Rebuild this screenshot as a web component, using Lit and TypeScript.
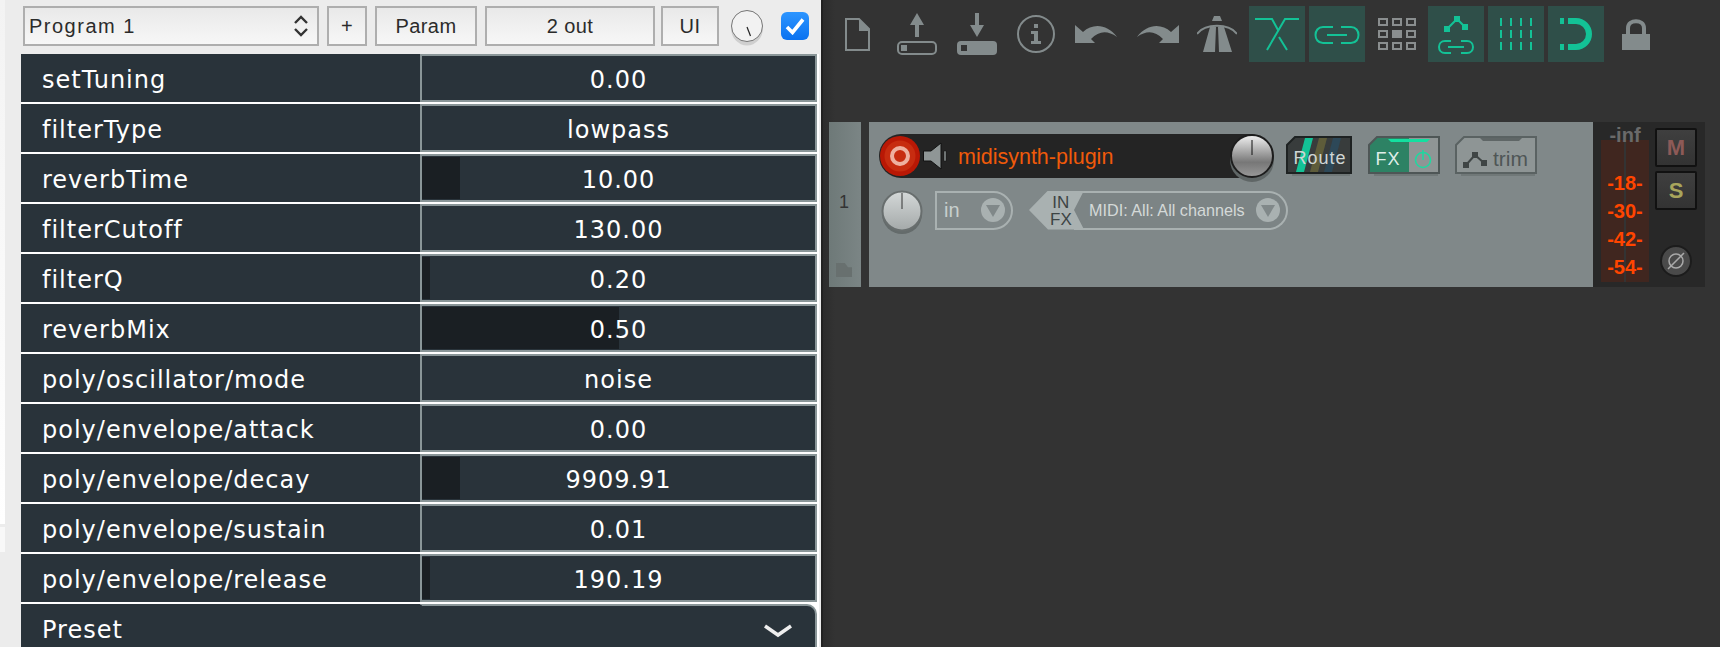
import { LitElement, html, css, svg } from "lit";
import { customElement } from "lit/decorators.js";

const rows: [string, string, number][] = [
  ["setTuning", "0.00", 0],
  ["filterType", "lowpass", 0],
  ["reverbTime", "10.00", 9.7],
  ["filterCutoff", "130.00", 0],
  ["filterQ", "0.20", 2],
  ["reverbMix", "0.50", 50],
  ["poly/oscillator/mode", "noise", 0],
  ["poly/envelope/attack", "0.00", 0],
  ["poly/envelope/decay", "9909.91", 9.7],
  ["poly/envelope/sustain", "0.01", 0],
  ["poly/envelope/release", "190.19", 2],
];

const G = "#838b8c";
const T = "#13c296";

const icons = {
  file: svg`<path d="M1 1H14L24 11V32H1Z" fill="none" stroke="${G}" stroke-width="2"/><path d="M14 1L24 11V13H14Z" fill="${G}"/>`,
  up: svg`<path d="M20 0L27 12H22V24H18V12H13Z" fill="${G}"/><rect x="1" y="29" width="38" height="12" rx="4" fill="none" stroke="${G}" stroke-width="2"/><rect x="4" y="32" width="6" height="6" fill="${G}"/>`,
  down: svg`<path d="M20 24L27 12H22V0H18V12H13Z" fill="${G}"/><rect x="0" y="28" width="40" height="14" rx="4" fill="${G}"/><rect x="4" y="32" width="6" height="6" fill="#333"/>`,
  info: svg`<circle cx="19" cy="19" r="18" fill="none" stroke="${G}" stroke-width="2"/><path d="M17 9h4v4h-4ZM14 16h7v10h3v3H14v-3h3v-7h-3Z" fill="${G}"/>`,
  undo: svg`<path d="M0 0L8 7C18 -2 32 -1 42 12C32 5 24 6 16 14L20 18H0Z" fill="${G}"/>`,
  redo: svg`<path d="M42 0L34 7C24 -2 10 -1 0 12C10 5 18 6 26 14L22 18H42Z" fill="${G}"/>`,
  road: svg`<path d="M17 0H23L25 5H15Z" fill="${G}"/><path d="M0 18C8 7 32 7 40 18" fill="none" stroke="${G}" stroke-width="2"/><path d="M13 11H19L18 36H6ZM21 11H27L35 36H22Z" fill="${G}"/>`,
  env: svg`<path d="M6 13H23L29 24M18 44L36 13H50M30 31L38 44" fill="none" stroke="${T}" stroke-width="2"/>`,
  link: svg`<path d="M24 21H14C4 21 4 37 14 37H24M32 21H42C52 21 52 37 42 37H32M18 29H38" fill="none" stroke="${T}" stroke-width="2"/>`,
  autoLink: svg`<path d="M19 23L29 13L37 21" fill="none" stroke="${T}" stroke-width="2"/><path d="M16 20h6v6h-6ZM26 10h6v6h-6ZM34 18h6v6h-6Z" fill="${T}"/><path d="M23 35H17C9 35 9 47 17 47H23M33 35H39C47 35 47 47 39 47H33M20 41H36" fill="none" stroke="${T}" stroke-width="2"/>`,
  magnet: svg`<path d="M12 12h4v6h-4ZM12 38h4v6h-4Z" fill="${T}"/><path d="M20 12H28A16 16 0 0 1 28 44H20V38H28A10 10 0 0 0 28 18H20Z" fill="${T}"/>`,
  lock: svg`<path d="M6 16V10C6 1 22 1 22 10V16" fill="none" stroke="${G}" stroke-width="4"/><rect x="0" y="16" width="28" height="16" fill="${G}"/>`,
};

const gridCells = [0, 1, 2, 3, 4, 5, 6, 7, 8];

@customElement("param-row")
class ParamRow extends LitElement {
  static properties = { name: {}, value: {}, pct: { type: Number } };
  name = "";
  value = "";
  pct = 0;
  static styles = css`
    :host { display: flex; height: 48px; }
    .n { width: 399px; padding: 2px 0 0 21px; box-sizing: border-box; color: #fff; line-height: 49px; background: #29333a; }
    .v { flex: 1; margin-right: 2px; position: relative; border: 2px solid #8a9698; background: #29333a; color: #fff; text-align: center; line-height: 48px; }
    .f { position: absolute; left: 0; top: 1px; bottom: 1px; background: #1a1f23; }
    .t { position: relative; }
  `;
  render() {
    return html`<div class="n">${this.name}</div><div class="v">${this.pct ? html`<div class="f" style="width:${this.pct}%"></div>` : ""}<span class="t">${this.value}</span></div>`;
  }
}

@customElement("app-root")
class AppRoot extends LitElement {
  static styles = css`
    :host { display: flex; width: 1720px; height: 647px; overflow: hidden; background: #333; font-family: "Lucida Grande", "DejaVu Sans", sans-serif; }
    .left { width: 823px; height: 647px; flex: none; box-sizing: border-box; padding: 6px 0 0 21px; background: #ececec; border-right: 2px solid #222; overflow: hidden; position: relative; }
    .edge { position: absolute; left: 0; top: 0; width: 5px; height: 524px; background: linear-gradient(#f3f3f3, #fff); }
    .edge2 { position: absolute; left: 0; top: 527px; width: 5px; height: 25px; background: #f8f8f8; }
    .bar { display: flex; align-items: center; height: 40px; padding-left: 2px; font-family: "Liberation Sans", sans-serif; font-size: 20px; color: #2b2b2b; margin-bottom: 8px; }
    .btn { box-sizing: border-box; height: 40px; border: 2px solid #aeaeae; background: linear-gradient(#e9e9e9, #f7f7f7); display: flex; align-items: center; justify-content: center; letter-spacing: .4px; }
    .sel { width: 296px; justify-content: space-between; padding: 0 8px 0 4px; letter-spacing: 1.5px; }
    .plus { width: 40px; margin-left: 8px; }
    .param { width: 102px; margin-left: 8px; }
    .out { width: 170px; margin-left: 8px; }
    .ui { width: 58px; margin-left: 6px; }
    .knob { width: 32px; height: 36px; margin: 4px 0 0 12px; flex: none; }
    .check { width: 28px; height: 28px; margin-left: 18px; border-radius: 6px; background: linear-gradient(#2c95ff, #0b72f0); display: flex; align-items: center; justify-content: center; }
    .rows { display: flex; flex-direction: column; gap: 2px; width: 798px; font-size: 24px; letter-spacing: 1px; background: #fff; }
    .preset { display: flex; height: 60px; color: #fff; }
    .preset .n { width: 399px; padding: 2px 0 0 21px; box-sizing: border-box; line-height: 49px; background: #29333a; }
    .preset .v { flex: 1; margin-right: 2px; background: #29333a; border-top: 2px solid #8a9698; border-right: 2px solid #8a9698; border-left: 2px solid #29333a; border-top-right-radius: 10px; display: flex; justify-content: flex-end; padding: 18px 22px 0 0; box-sizing: border-box; }

    .right { flex: 1; min-width: 0; display: flex; flex-direction: column; background: linear-gradient(90deg, #2c2c2c, #333 12px); }
    .tools { display: flex; align-items: center; height: 56px; margin-top: 6px; padding-left: 22px; }
    .ico { display: block; flex: none; }
    .act { width: 56px; height: 56px; background: #2f4f49; flex: none; display: block; }
    .grid { display: grid; grid-template-columns: repeat(3, 10px); gap: 4px; flex: none; width: 38px; margin: 0 12px 0 13px; }
    .grid div { height: 8px; border: 2px solid #8a8e8f; box-sizing: border-box; }
    .grid div.on { background: #8a8e8f; }

    .track { display: flex; height: 165px; margin: 60px 15px 0 6px; color: #333; }
    .num { width: 32px; background: linear-gradient(90deg, #6e7978, #7b8585); display: flex; flex-direction: column; align-items: center; justify-content: space-between; padding: 69px 2px 10px 0; box-sizing: border-box; font: 18px "Liberation Sans", sans-serif; color: #333; line-height: 22px; }
    .folder { width: 16px; height: 14px; background: #68706f; clip-path: polygon(0 0, 55% 0, 75% 30%, 100% 30%, 100% 100%, 0 100%); }
    .main { width: 724px; margin-left: 8px; background: #808889; padding: 12px 0 0 10px; box-sizing: border-box; display: flex; flex-direction: column; gap: 12px; }
    .line { display: flex; align-items: center; font-family: "Liberation Sans", sans-serif; }
    .l1 { height: 44px; }
    .l2 { height: 40px; }
    .pill { width: 393px; height: 44px; border-radius: 22px; background: #242424; display: flex; align-items: center; box-sizing: border-box; flex: none; }
    .rec { width: 40px; height: 40px; flex: none; margin-left: 1px; }
    .spk { width: 24px; height: 28px; flex: none; margin-left: 3px; }
    .name { color: #f05a0a; font-size: 21.5px; margin: 2px 0 0 11px; flex: 1; }
    .vol { width: 44px; height: 50px; flex: none; margin: 6px -2px 0 0; }
    .sb { width: 66px; height: 40px; flex: none; margin-left: 14px; }
    .fx { width: 72px; margin-left: 16px; }
    .trim { width: 82px; margin-left: 15px; }
    .sb text { font-family: "Liberation Sans", sans-serif; }
    .pan { width: 42px; height: 46px; flex: none; margin: 6px 12px 0 2px; }
    .in { box-sizing: border-box; width: 78px; height: 39px; border: 2px solid #a9b1b1; border-radius: 0 20px 20px 0; display: flex; align-items: center; justify-content: space-between; padding: 0 6px 0 7px; color: #c8cfce; font-size: 20px; flex: none; }
    .dd { width: 24px; height: 24px; flex: none; display: block; }
    .chan { display: flex; height: 39px; width: 259px; margin-left: 16px; flex: none; position: relative; }
    .tag { position: relative; z-index: 1; width: 55px; flex: none; background: #a9b1b1; clip-path: polygon(0 50%, 19px 0, 100% 0, 45px 50%, 100% 100%, 19px 100%); }
    .tagt { position: absolute; z-index: 2; left: 21px; top: 3px; font-size: 17px; line-height: 17px; color: #3d4444; text-align: center; }
    .midi { flex: 1; margin-left: -10px; display: flex; align-items: center; justify-content: space-between; padding: 0 6px 0 15px; border: 2px solid #a9b1b1; border-left: 0; border-radius: 0 20px 20px 0; color: #d4d9d8; font-size: 16.2px; background: #7c8485; box-sizing: border-box; }

    .meter { flex: 1; min-width: 0; background: #282828; display: flex; font-family: "Liberation Sans", sans-serif; padding-left: 8px; position: relative; }
    .vu { width: 48px; flex: none; margin-top: 18px; height: 142px; background: linear-gradient(90deg, #40261f 0 23px, #333 23px 25px, #40261f 25px); display: flex; flex-direction: column; align-items: center; padding-top: 29px; box-sizing: border-box; color: #ff4500; font-weight: 700; font-size: 20px; line-height: 28px; }
    .inf { position: absolute; left: 8px; width: 48px; top: 2px; text-align: center; font-weight: 700; font-size: 20px; color: #6a6a6a; }
    .ms { display: flex; flex-direction: column; margin-left: 6px; padding-top: 6px; align-items: center; }
    .m { width: 42px; height: 39px; box-sizing: border-box; border: 2px solid #111; border-radius: 2px; background: linear-gradient(#3f3f3f, #333); font-weight: 700; font-size: 22px; display: flex; align-items: center; justify-content: center; margin-bottom: 4px; }
    .phase { width: 32px; height: 32px; margin-top: 31px; }
  `;

  render() {
    return html`
      <div class="left">
        <div class="edge"></div>
        <div class="edge2"></div>
        <div class="bar">
          <div class="btn sel"><span>Program 1</span>
            <svg width="16" height="24" viewBox="0 0 16 24"><path d="M2 9L8 3L14 9M2 15L8 21L14 15" fill="none" stroke="#333" stroke-width="2.4"/></svg>
          </div>
          <div class="btn plus">+</div>
          <div class="btn param">Param</div>
          <div class="btn out">2 out</div>
          <div class="btn ui">UI</div>
          <svg class="knob" viewBox="0 0 32 36"><ellipse cx="16" cy="18" rx="16" ry="17.5" fill="#cfcfcf"/><circle cx="16" cy="16" r="15.5" fill="#f2f2f2" stroke="#777" stroke-width="1"/><path d="M16 17L19.5 26" stroke="#222" stroke-width="1.2"/></svg>
          <div class="check"><svg width="20" height="18" viewBox="0 0 20 18"><path d="M2 10L7.5 15.5L18 2.5" fill="none" stroke="#fff" stroke-width="3.6"/></svg></div>
        </div>
        <div class="rows">
          ${rows.map((r) => html`<param-row .name=${r[0]} .value=${r[1]} .pct=${r[2]}></param-row>`)}
          <div class="preset"><div class="n">Preset</div><div class="v"><svg width="30" height="16" viewBox="0 0 30 16"><path d="M2 2L15 11L28 2" fill="none" stroke="#eee" stroke-width="3.5"/></svg></div></div>
        </div>
      </div>
      <div class="right">
        <div class="tools">
          <svg class="ico" width="26" height="33" style="margin-right:26px" viewBox="0 0 26 33">${icons.file}</svg>
          <svg class="ico" width="40" height="42" style="margin-right:20px" viewBox="0 0 40 42">${icons.up}</svg>
          <svg class="ico" width="40" height="42" style="margin-right:20px" viewBox="0 0 40 42">${icons.down}</svg>
          <svg class="ico" width="38" height="38" style="margin-right:20px" viewBox="0 0 38 38">${icons.info}</svg>
          <svg class="ico" width="42" height="18" style="margin-right:20px" viewBox="0 0 42 18">${icons.undo}</svg>
          <svg class="ico" width="42" height="18" style="margin-right:18px" viewBox="0 0 42 18">${icons.redo}</svg>
          <svg class="ico" width="40" height="36" style="margin-right:12px" viewBox="0 0 40 36">${icons.road}</svg>
          <svg class="act" viewBox="0 0 56 56">${icons.env}</svg>
          <svg class="act" style="margin-left:4px" viewBox="0 0 56 56">${icons.link}</svg>
          <div class="grid">${gridCells.map((i) => html`<div class=${i === 4 ? "on" : ""}></div>`)}</div>
          <svg class="act" viewBox="0 0 56 56">${icons.autoLink}</svg>
          <svg class="act" style="margin-left:4px" viewBox="0 0 56 56">${[13, 23, 33, 43].flatMap((x) => [12, 24, 36].map((y) => svg`<rect x=${x - 1} y=${y} width="2" height="8" fill=${T} />`))}</svg>
          <svg class="act" style="margin-left:4px" viewBox="0 0 56 56">${icons.magnet}</svg>
          <svg class="ico" width="28" height="32" style="margin-left:18px" viewBox="0 0 28 32">${icons.lock}</svg>
        </div>
        <div class="track">
          <div class="num"><span>1</span><div class="folder"></div></div>
          <div class="main">
            <div class="line l1">
              <div class="pill">
                <svg class="rec" viewBox="0 0 40 40"><circle cx="20" cy="20" r="20" fill="#b91805"/><circle cx="20" cy="20" r="15.5" fill="#c72c10"/><circle cx="20" cy="20" r="8" fill="none" stroke="#eeb0a0" stroke-width="4"/></svg>
                <svg class="spk" viewBox="0 0 24 28"><path d="M0.5 9H8L18 1V27L8 19H0.5Z" fill="#8f9696" stroke="#111"/><rect x="21" y="9" width="2" height="10" fill="#8f9696" stroke="#111" stroke-width=".5"/></svg>
                <span class="name">midisynth-plugin</span>
                <svg class="vol" viewBox="0 0 44 50"><defs><linearGradient id="v" x1="0" y1="0" x2="0" y2="1"><stop offset="0" stop-color="#f2f2f2"/><stop offset=".65" stop-color="#777"/><stop offset="1" stop-color="#999"/></linearGradient></defs><circle cx="22" cy="26" r="22" fill="#5f6666"/><circle cx="22" cy="22" r="21" fill="url(#v)" stroke="#1d1d1d" stroke-width="2"/><path d="M22 6V21" stroke="#111" stroke-width="1"/></svg>
              </div>
              <svg class="sb" viewBox="0 0 66 40"><path d="M6 36H64V40H6Z" fill="#707878"/><path d="M9 1H65V37H1V9Z" fill="#383c3c" stroke="#1e2222" stroke-width="2"/><path d="M19 2H27L18 36H10Z" fill="#13c296"/><path d="M33 2H41L32 36H24Z" fill="#5e5c3a"/><path d="M47 2H55L46 36H38Z" fill="#2d4858"/><text x="34" y="28" text-anchor="middle" font-size="18" fill="#cfd6d5" letter-spacing="1">Route</text></svg>
              <svg class="sb fx" viewBox="0 0 72 40"><path d="M6 37H70V40H6Z" fill="#707878"/><path d="M9 1H71V37H1V9Z" fill="#2d8264"/><path d="M41 2H70V36H41Z" fill="#8f9595"/><path d="M9 1H71V37H1V9Z" fill="none" stroke="#4e5656" stroke-width="2"/><path d="M20 3H62L59 6H23Z" fill="#13e0a0"/><text x="20" y="29" text-anchor="middle" font-size="18" fill="#dfeee8" letter-spacing="1">FX</text><circle cx="55" cy="24" r="7.5" fill="none" stroke="#20d8a0" stroke-width="1.6"/><path d="M55 14V24" stroke="#20d8a0" stroke-width="1.6"/></svg>
              <svg class="sb trim" viewBox="0 0 82 40"><path d="M6 37H80V40H6Z" fill="#707878"/><path d="M9 1H81V37H1V9Z" fill="#8e9595" stroke="#5a6262" stroke-width="2"/><path d="M25 2H67L64 5H28Z" fill="#5f6666"/><path d="M11 29L20 19L29 27" fill="none" stroke="#3f4545" stroke-width="2"/><path d="M8 26h6v6H8ZM17 16h6v6h-6ZM26 24h6v6h-6Z" fill="#3f4545"/><text x="38" y="30" font-size="21" fill="#4f5656">trim</text></svg>
            </div>
            <div class="line l2">
              <svg class="pan" viewBox="0 0 42 46"><circle cx="21" cy="24" r="20" fill="#646b6b"/><defs><linearGradient id="p" x1="0" y1="0" x2="0" y2="1"><stop offset="0" stop-color="#d4d8d8"/><stop offset="1" stop-color="#a4a9a9"/></linearGradient></defs><circle cx="21" cy="21" r="19.5" fill="url(#p)" stroke="#686e6e" stroke-width="2"/><path d="M21 3V19" stroke="#333"/></svg>
              <div class="in"><span>in</span><svg class="dd" viewBox="0 0 24 24"><circle cx="12" cy="12" r="12" fill="#a9b1b1"/><path d="M5 7H19L12 19Z" fill="#808889"/></svg></div>
              <div class="chan">
                <div class="tag"></div>
                <div class="tagt">IN<br />FX</div>
                <div class="midi"><span>MIDI: All: All channels</span><svg class="dd" viewBox="0 0 24 24"><circle cx="12" cy="12" r="12" fill="#a9b1b1"/><path d="M5 7H19L12 19Z" fill="#808889"/></svg></div>
              </div>
            </div>
          </div>
          <div class="meter">
            <div class="vu"><span>-18-</span><span>-30-</span><span>-42-</span><span>-54-</span></div>
            <div class="inf">-inf</div>
            <div class="ms">
              <div class="m" style="color:#8d5a57">M</div>
              <div class="m" style="color:#a8a55c">S</div>
              <svg class="phase" viewBox="0 0 32 32"><circle cx="16" cy="16" r="15" fill="#4a4a4a" stroke="#1c1c1c" stroke-width="2"/><circle cx="16" cy="16" r="7" fill="none" stroke="#aaa" stroke-width="1.5"/><path d="M8 24L24 8" stroke="#aaa" stroke-width="1.5"/></svg>
            </div>
          </div>
        </div>
      </div>
    `;
  }
}
